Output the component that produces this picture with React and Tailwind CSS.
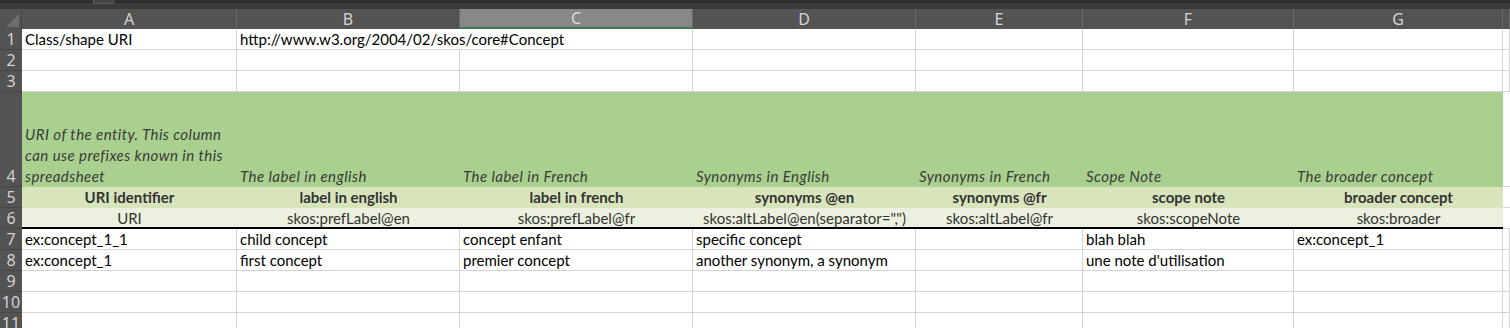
import React from "react";

const COLS = ["A", "B", "C", "D", "E", "F", "G", ""];

const font = { fontFamily: "Lato, 'Liberation Sans', sans-serif" };

function RowHead({ n, align = "items-center" }) {
  return (
    <div
      className={`flex ${align} justify-center bg-[#535353] border-b border-[#474747] text-[16px] text-[#d2d2d2]`}
      style={{ fontFamily: "'Noto Sans', 'Open Sans', sans-serif" }}
    >
      <span className="leading-[20px]">{n}</span>
    </div>
  );
}

function Cell({ children, span = false }) {
  return (
    <div
      className={`h-full overflow-visible whitespace-nowrap px-[3px] text-[15px] leading-[20px] text-black flex items-end border-r border-b border-[#d4d4d4] ${span ? "col-span-2" : ""}`}
    >
      {children}
    </div>
  );
}

const row4 = [
  "URI of the entity. This column\ncan use prefixes known in this\nspreadsheet",
  "The label in english",
  "The label in French",
  "Synonyms in English",
  "Synonyms in French",
  "Scope Note",
  "The broader concept",
];
const row5 = [
  "URI identifier",
  "label in english",
  "label in french",
  "synonyms @en",
  "synonyms @fr",
  "scope note",
  "broader concept",
];
const row6 = [
  "URI",
  "skos:prefLabel@en",
  "skos:prefLabel@fr",
  'skos:altLabel@en(separator=",")',
  "skos:altLabel@fr",
  "skos:scopeNote",
  "skos:broader",
];
const row7 = ["ex:concept_1_1", "child concept", "concept enfant", "specific concept", "", "blah blah", "ex:concept_1"];
const row8 = ["ex:concept_1", "first concept", "premier concept", "another synonym, a synonym", "", "une note d'utilisation", ""];

export default function App() {
  return (
    <div className="w-[1510px] h-[328px] overflow-hidden bg-white" style={font}>
      {/* top strip */}
      <div className="relative h-[9px] bg-[#3b3b3b]">
        <div className="h-[3px] bg-[#303030] border-b border-[#2a2a2a]" />
        <div className="absolute left-[93px] top-0 w-[21px] h-[4px] bg-[#454545] border border-t-0 border-[#5a5a5a]" />
      </div>
      <div
        className="grid grid-cols-[22px_215px_223px_233px_223px_167px_211px_209px_1fr]"
        style={{ gridTemplateRows: "20px 21px 21px 21px 95px 21px 21px 21px 21px 21px 21px 21px" }}
      >
        {/* column headers */}
        <div className="relative bg-[#535353] border-r border-[#474747]">
          <svg className="absolute left-[6px] top-[5px]" width="13" height="13" viewBox="0 0 13 13">
            <path d="M13 0 L13 13 L0 13 Z" fill="#6f6f6f" />
          </svg>
        </div>
        {COLS.map((c, i) =>
          c === "C" ? (
            <div
              key={i}
              className="flex items-center justify-center bg-[#888888] border-r border-[#6a6a6a] border-b-2 border-b-[#3f7a55] text-[16px] text-[#dadada]"
              style={{ fontFamily: "'Noto Sans', 'Open Sans', sans-serif" }}
            >
              {c}
            </div>
          ) : (
            <div
              key={i}
              className="flex items-center justify-center bg-[#535353] border-r border-[#6a6a6a] text-[16px] text-[#d4d4d4]"
              style={{ fontFamily: "'Noto Sans', 'Open Sans', sans-serif" }}
            >
              {c}
            </div>
          )
        )}

        {/* row 1 */}
        <RowHead n="1" />
        <Cell>Class/shape URI</Cell>
        <Cell span>http://www.w3.org/2004/02/skos/core#Concept</Cell>
        <Cell />
        <Cell />
        <Cell />
        <Cell />
        <Cell />

        {/* rows 2-3 */}
        {[2, 3].map((n) => (
          <React.Fragment key={n}>
            <RowHead n={String(n)} />
            {COLS.map((_, i) => (
              <Cell key={i} />
            ))}
          </React.Fragment>
        ))}

        {/* row 4 */}
        <RowHead n="4" align="items-end" />
        {row4.map((t, i) => (
          <div
            key={i}
            className="h-full bg-[#a9d08e] px-[3px] flex items-end text-[15px] leading-[21px] italic tracking-[0.45px] text-[#3a3a3a] whitespace-pre-line"
          >
            {t}
          </div>
        ))}
        <div className="border-b border-[#d4d4d4]" />

        {/* row 5 */}
        <RowHead n="5" />
        {row5.map((t, i) => (
          <div
            key={i}
            className="h-full bg-[#d8e4bc] pb-[1px] flex items-end justify-center text-[15px] leading-[20px] font-bold text-[#333333] whitespace-nowrap"
          >
            {t}
          </div>
        ))}
        <div className="border-b border-[#d4d4d4]" />

        {/* row 6 */}
        <RowHead n="6" />
        {row6.map((t, i) => (
          <div
            key={i}
            className="h-full bg-[#ebf1de] border-b-2 border-black pt-[2px] flex items-center justify-center text-[15px] leading-[19px] text-[#333333] whitespace-nowrap"
          >
            {t}
          </div>
        ))}
        <div className="border-b border-[#d4d4d4]" />

        {/* rows 7-8 */}
        {[row7, row8].map((r, ri) => (
          <React.Fragment key={ri}>
            <RowHead n={String(7 + ri)} />
            {r.map((t, i) => (
              <Cell key={i}>{t}</Cell>
            ))}
            <Cell />
          </React.Fragment>
        ))}

        {/* rows 9-11 */}
        {[9, 10, 11].map((n) => (
          <React.Fragment key={n}>
            <RowHead n={String(n)} />
            {COLS.map((_, i) => (
              <Cell key={i} />
            ))}
          </React.Fragment>
        ))}
      </div>
    </div>
  );
}
